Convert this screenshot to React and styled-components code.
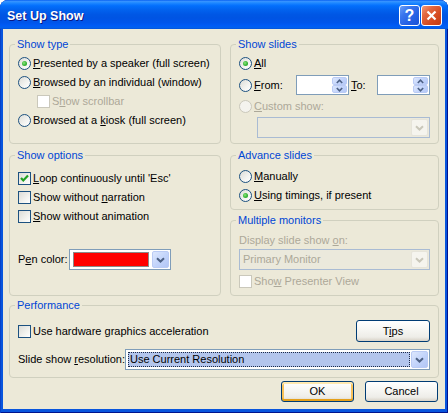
import React from 'react';
import styled, { createGlobalStyle, css } from 'styled-components';

const GlobalStyle = createGlobalStyle`
  html, body { margin: 0; padding: 0; background: #ffffff; }
  body {
    font-family: "Liberation Sans", Arial, sans-serif;
    font-size: 11px;
    line-height: 13px;
    color: #000;
  }
  * { box-sizing: border-box; }
`;

const Window = styled.div`
  width: 448px;
  height: 413px;
  display: flex;
  flex-direction: column;
  border-radius: 8px 8px 0 0;
  overflow: hidden;
  background: #0855dd;
  box-shadow: inset 1px 0 0 #0842c8, inset -1px 0 0 #00138c, inset 0 -1px 0 #00138c;
`;

const TitleBar = styled.div`
  height: 29px;
  flex: none;
  display: flex;
  align-items: flex-start;
  padding: 0 6px 0 7px;
  background: linear-gradient(
    to bottom,
    #0058ee 0%,
    #3a93ff 4%,
    #288eff 8%,
    #127dff 14%,
    #036ffc 20%,
    #0262ee 34%,
    #0057e5 50%,
    #0054e3 62%,
    #0055eb 78%,
    #005bf5 88%,
    #0260ee 95%,
    #0652d8 100%
  );
`;

const Title = styled.div`
  flex: 1;
  margin-top: 9px;
  font-family: "Liberation Sans", Arial, sans-serif;
  font-weight: bold;
  font-size: 12.5px;
  line-height: 14px;
  color: #ffffff;
  text-shadow: 1px 1px 0 #0a1883;
`;

const CaptionButtons = styled.div`
  display: flex;
  gap: 1px;
  margin-top: 5px;
`;

const CaptionButton = styled.div`
  width: 21px;
  height: 21px;
  border: 1px solid #ffffff;
  border-radius: 3px;
  display: flex;
  align-items: center;
  justify-content: center;
  color: #ffffff;
  font-family: "Liberation Sans", Arial, sans-serif;
  font-weight: bold;
  font-size: 16px;
  line-height: 16px;
  ${p =>
    p.$close
      ? css`
          background: linear-gradient(135deg, #f19a78 0%, #e3673f 30%, #d54a20 65%, #c23c14 100%);
        `
      : css`
          background: linear-gradient(135deg, #6b9ff7 0%, #3a77ee 30%, #2560e4 65%, #1b52d6 100%);
        `}
`;

const Client = styled.div`
  flex: 1;
  margin: 0 3px 4px 3px;
  background: #ece9d8;
  padding: 15px 7px 7px 6px;
  display: flex;
  flex-direction: column;
`;

const Row = styled.div`
  display: flex;
  gap: 9px;
  height: ${p => p.$h}px;
  margin-top: ${p => p.$mt || 0}px;
  flex: none;
`;

const Column = styled.div`
  width: ${p => p.$w}px;
  display: flex;
  flex-direction: column;
  gap: 10px;
`;

const Group = styled.div`
  position: relative;
  width: ${p => (p.$w ? `${p.$w}px` : 'auto')};
  height: ${p => (p.$h ? `${p.$h}px` : 'auto')};
  flex: ${p => (p.$grow ? 1 : 'none')};
  border: 1px solid #d0d0bf;
  border-radius: 4px;
  padding: ${p => p.$pad || '0 8px'};
  display: flex;
  flex-direction: column;
`;

const GroupTitle = styled.div`
  position: absolute;
  top: -7px;
  left: 5px;
  padding: 0 2px;
  background: #ece9d8;
  color: #0046d5;
  line-height: 13px;
`;

const Option = styled.div`
  display: flex;
  align-items: center;
  gap: 2px;
  height: ${p => p.$h || 19}px;
  flex: none;
  margin-top: ${p => p.$mt || 0}px;
  padding-left: ${p => p.$indent || 0}px;
  color: ${p => (p.$disabled ? '#aca899' : '#000')};
  white-space: nowrap;
`;

const K = styled.span`
  text-decoration: underline;
  text-underline-offset: 1px;
`;

const RadioDot = styled.span`
  width: 13px;
  height: 13px;
  flex: none;
  border-radius: 50%;
  border: 1px solid ${p => (p.$disabled ? '#cac8bb' : '#1c5180')};
  background: ${p =>
    p.$disabled ? '#f4f3ee' : 'linear-gradient(135deg, #dcdcd7 0%, #f4f4f1 60%, #ffffff 100%)'};
  display: flex;
  align-items: center;
  justify-content: center;
  &::after {
    content: '';
    display: ${p => (p.$checked ? 'block' : 'none')};
    width: 5px;
    height: 5px;
    border-radius: 50%;
    background: radial-gradient(circle at 40% 40%, #8ce67d 0%, #3cb83a 50%, #1a9a1a 100%);
  }
`;

const CheckBox = styled.span`
  width: 13px;
  height: 13px;
  flex: none;
  border: 1px solid ${p => (p.$disabled ? '#cac8bb' : '#1c5180')};
  background: ${p =>
    p.$disabled ? '#ffffff' : 'linear-gradient(135deg, #dcdcd7 0%, #f2f2ee 60%, #ffffff 100%)'};
  display: flex;
  align-items: center;
  justify-content: center;
`;

const Check = () => (
  <svg width="11" height="11" viewBox="0 0 11 11">
    <polyline points="2,5 4.3,7.5 9,2.5" fill="none" stroke="#21a121" strokeWidth="2.2" />
  </svg>
);

const FieldLabel = styled.span`
  width: ${p => p.$w}px;
  flex: none;
  margin-left: ${p => p.$ml || 0}px;
  color: ${p => (p.$disabled ? '#aca899' : '#000')};
  white-space: nowrap;
`;

const SpinBox = styled.div`
  width: 53px;
  height: 20px;
  flex: none;
  border: 1px solid #7f9db9;
  background: #ffffff;
  display: flex;
  justify-content: flex-end;
  padding: 1px;
`;

const SpinButtons = styled.div`
  width: 15px;
  display: flex;
  flex-direction: column;
`;

const SpinHalf = styled.div`
  flex: 1;
  border: 1px solid #bacbf5;
  border-radius: 2px;
  background: linear-gradient(135deg, #dde7fd 0%, #c4d5fb 50%, #b4c8f6 100%);
  display: flex;
  align-items: center;
  justify-content: center;
`;

const Arrow = ({ up }) => (
  <svg width="7" height="5" viewBox="0 0 7 5">
    <polyline
      points={up ? '0.8,4 3.5,1.2 6.2,4' : '0.8,1 3.5,3.8 6.2,1'}
      fill="none"
      stroke="#4d6185"
      strokeWidth="1.6"
    />
  </svg>
);

const Combo = styled.div`
  width: ${p => p.$w}px;
  height: 21px;
  flex: none;
  margin-top: ${p => p.$mt || 0}px;
  margin-left: ${p => p.$ml || 0}px;
  border: 1px solid ${p => (p.$disabled ? '#a9bbd3' : '#7f9db9')};
  background: ${p => (p.$disabled ? '#ebe9dc' : '#ffffff')};
  display: flex;
  padding: 1px;
  gap: 1px;
`;

const ComboField = styled.div`
  flex: 1;
  display: flex;
  align-items: center;
  padding-left: ${p => p.$pl || 2}px;
  color: ${p => (p.$disabled ? '#aca899' : '#000')};
  white-space: nowrap;
  ${p =>
    p.$selected &&
    css`
      margin: 1px 0 1px 1px;
      background: #b3c5ec;
      outline: 1px dotted #1c2a48;
      outline-offset: -1px;
    `}
`;

const Swatch = styled.div`
  flex: 1;
  margin: 1px 2px 1px 2px;
  background: #ff0000;
  border: 1px solid #8a8a8a;
`;

const DropButton = styled.div`
  width: 17px;
  flex: none;
  border-radius: 2px;
  display: flex;
  align-items: center;
  justify-content: center;
  ${p =>
    p.$disabled
      ? css`
          border: 1px solid #e6e4da;
          background: #f5f4ee;
        `
      : css`
          border: 1px solid #bacbf5;
          background: linear-gradient(135deg, #dde7fd 0%, #c4d5fb 50%, #b2c6f6 100%);
        `}
`;

const Chevron = ({ disabled }) => (
  <svg width="9" height="6" viewBox="0 0 9 6">
    <polyline
      points="1,1.3 4.5,4.6 8,1.3"
      fill="none"
      stroke={disabled ? '#c9c7ba' : '#4d6185'}
      strokeWidth="2"
    />
  </svg>
);

const LabelLine = styled.div`
  height: ${p => p.$h || 18}px;
  display: flex;
  align-items: center;
  color: ${p => (p.$disabled ? '#aca899' : '#000')};
  flex: none;
`;

const SpreadRow = styled.div`
  display: flex;
  align-items: center;
  justify-content: space-between;
  height: ${p => p.$h}px;
  margin-top: ${p => p.$mt || 0}px;
  flex: none;
`;

const InlineRow = styled.div`
  display: flex;
  align-items: center;
  height: ${p => p.$h || 21}px;
  margin-top: ${p => p.$mt || 0}px;
  flex: none;
`;

const Button = styled.button`
  width: ${p => p.$w || 73}px;
  height: ${p => p.$h || 21}px;
  flex: none;
  padding: 0;
  border: 1px solid #003c74;
  border-radius: 3px;
  background: linear-gradient(to bottom, #ffffff 0%, #f7f7f4 40%, #eeede8 80%, #d8d2c6 100%);
  font-family: "Liberation Sans", Arial, sans-serif;
  font-size: 11px;
  line-height: 13px;
  color: #000;
  ${p =>
    p.$default &&
    css`
      box-shadow: inset 0 2px 0 #ffe9b0, inset 0 -2px 0 #e5a01a, inset 2px 0 0 #f8c25a,
        inset -2px 0 0 #f8c25a;
    `}
`;

const ButtonRow = styled.div`
  display: flex;
  justify-content: flex-end;
  gap: 11px;
  margin-top: 3px;
  height: 21px;
  flex: none;
`;

const Radio = ({ checked, disabled, children, ...rest }) => (
  <Option $disabled={disabled} {...rest}>
    <RadioDot $checked={checked} $disabled={disabled} />
    <span>{children}</span>
  </Option>
);

const Checkbox = ({ checked, disabled, children, ...rest }) => (
  <Option $disabled={disabled} {...rest}>
    <CheckBox $disabled={disabled}>{checked && <Check />}</CheckBox>
    <span>{children}</span>
  </Option>
);

const Spin = () => (
  <SpinBox>
    <SpinButtons>
      <SpinHalf>
        <Arrow up />
      </SpinHalf>
      <SpinHalf>
        <Arrow />
      </SpinHalf>
    </SpinButtons>
  </SpinBox>
);

export default function App() {
  return (
    <>
      <GlobalStyle />
      <Window>
        <TitleBar>
          <Title>Set Up Show</Title>
          <CaptionButtons>
            <CaptionButton>?</CaptionButton>
            <CaptionButton $close>
              <svg width="11" height="11" viewBox="0 0 11 11">
                <path d="M1.5 1.5 L9.5 9.5 M9.5 1.5 L1.5 9.5" stroke="#ffffff" strokeWidth="2.2" />
              </svg>
            </CaptionButton>
          </CaptionButtons>
        </TitleBar>
        <Client>
          <Row $h={100}>
            <Group $w={212} $pad="9px 8px 0 8px">
              <GroupTitle>Show type</GroupTitle>
              <Radio checked>
                <K>P</K>resented by a speaker (full screen)
              </Radio>
              <Radio>
                <K>B</K>rowsed by an individual (window)
              </Radio>
              <Checkbox disabled $indent={19}>
                S<K>h</K>ow scrollbar
              </Checkbox>
              <Radio>
                Browsed at a <K>k</K>iosk (full screen)
              </Radio>
            </Group>
            <Group $w={209} $pad="9px 8px 0 8px">
              <GroupTitle>Show slides</GroupTitle>
              <Radio checked>
                <K>A</K>ll
              </Radio>
              <InlineRow $h={20} $mt={2}>
                <RadioDot />
                <FieldLabel $w={42} $ml={2}>
                  <K>F</K>rom:
                </FieldLabel>
                <Spin />
                <FieldLabel $w={26} $ml={2}>
                  <K>T</K>o:
                </FieldLabel>
                <Spin />
              </InlineRow>
              <Radio disabled $mt={2}>
                <K>C</K>ustom show:
              </Radio>
              <Combo $w={173} $ml={18} $mt={1} $disabled>
                <ComboField $disabled />
                <DropButton $disabled>
                  <Chevron disabled />
                </DropButton>
              </Combo>
            </Group>
          </Row>

          <Row $h={141} $mt={11}>
            <Group $w={212} $pad="13px 8px 0 8px">
              <GroupTitle>Show options</GroupTitle>
              <Checkbox checked>
                <K>L</K>oop continuously until 'Esc'
              </Checkbox>
              <Checkbox>
                Show without <K>n</K>arration
              </Checkbox>
              <Checkbox>
                <K>S</K>how without animation
              </Checkbox>
              <InlineRow $mt={23}>
                <FieldLabel $w={51}>
                  P<K>e</K>n color:
                </FieldLabel>
                <Combo $w={102}>
                  <Swatch />
                  <DropButton>
                    <Chevron />
                  </DropButton>
                </Combo>
              </InlineRow>
            </Group>
            <Column $w={209}>
              <Group $h={55} $pad="11px 8px 0 8px">
                <GroupTitle>Advance slides</GroupTitle>
                <Radio>
                  <K>M</K>anually
                </Radio>
                <Radio checked>
                  <K>U</K>sing timings, if present
                </Radio>
              </Group>
              <Group $grow $pad="10px 8px 0 8px">
                <GroupTitle>Multiple monitors</GroupTitle>
                <LabelLine $disabled>
                  <span>
                    Display slide show <K>o</K>n:
                  </span>
                </LabelLine>
                <Combo $w={191} $disabled>
                  <ComboField $disabled $pl={2}>
                    Primary Monitor
                  </ComboField>
                  <DropButton $disabled>
                    <Chevron disabled />
                  </DropButton>
                </Combo>
                <Checkbox disabled $mt={2}>
                  Sho<K>w</K> Presenter View
                </Checkbox>
              </Group>
            </Column>
          </Row>

          <Row $h={73} $mt={9}>
            <Group $grow $pad="14px 8px 0 8px">
              <GroupTitle>Performance</GroupTitle>
              <SpreadRow $h={22}>
                <Checkbox>
                  Use hardware <K>g</K>raphics acceleration
                </Checkbox>
                <Button $w={74} $h={22}>
                  T<K>i</K>ps
                </Button>
              </SpreadRow>
              <InlineRow $mt={7}>
                <FieldLabel $w={107}>
                  Slide show <K>r</K>esolution:
                </FieldLabel>
                <Combo $w={305}>
                  <ComboField $selected>Use Current Resolution</ComboField>
                  <DropButton>
                    <Chevron />
                  </DropButton>
                </Combo>
              </InlineRow>
            </Group>
          </Row>

          <ButtonRow>
            <Button $default>OK</Button>
            <Button>Cancel</Button>
          </ButtonRow>
        </Client>
      </Window>
    </>
  );
}
